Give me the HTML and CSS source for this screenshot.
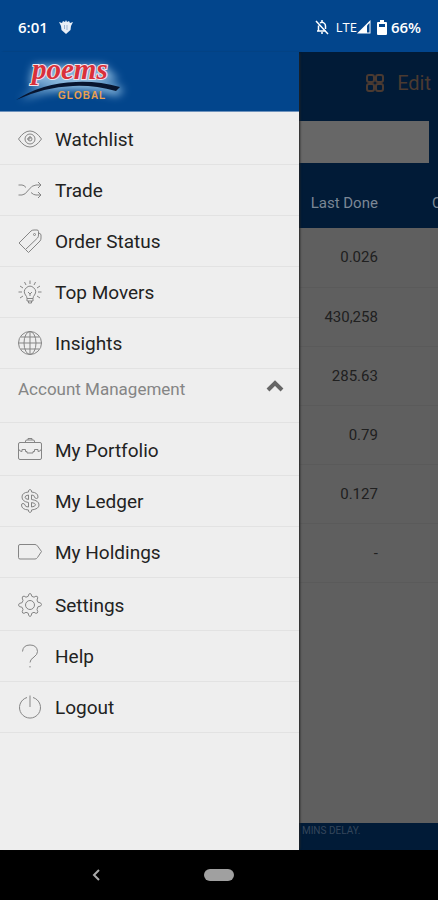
FILE: index.html
```html
<!DOCTYPE html>
<html lang="en">
<head>
<meta charset="utf-8">
<meta name="viewport" content="width=device-width, initial-scale=1">
<title>POEMS Global</title>
<link rel="stylesheet" href="styles.css">
</head>
<body>
<header class="status">
  <span class="clock">6:01</span>
  <svg class="bug" viewBox="0 0 16 16" width="16" height="16" aria-hidden="true"><path d="M1 3l3 1 1-2 2 1 1-2 1 2 2-1 1 2 3-1-2 4-.5 4L8 15l-4.500-4L3 7z" fill="#e9eef6"/><path d="M6.500 6v4M9 6v5" stroke="#9db4d3" fill="none"/></svg>
  <span class="spacer"></span>
  <svg class="bell" viewBox="0 0 16 16" width="16" height="16" fill="none" stroke="#fff" stroke-width="1.500" aria-hidden="true"><path d="M2 2l12 13M3 12h9M4.500 12V6.500M6 4q2-1.500 4 0 1.500 1 1.500 3v3M8 1v2M7 14h2"/></svg>
  <span class="lte">LTE</span>
  <svg class="signal" viewBox="0 0 14 14" width="14" height="14" aria-hidden="true"><path d="M13.500 0v13.500H0z" fill="#fff"/><path d="M10 5.500v7h2.500V3z" fill="#02458c"/></svg>
  <svg class="battery" viewBox="0 0 10 15" width="10" height="15" aria-hidden="true"><path d="M3 0h4v2h2q1 0 1 1v11q0 1-1 1H1q-1 0-1-1V3q0-1 1-1h2z" fill="#fff"/><path d="M2 4h6v3H2z" fill="#02458c"/></svg>
  <span class="percent">66%</span>
</header>
<div class="screen">
  <aside class="drawer">
    <div class="brand">
      <svg class="logo" viewBox="0 0 124 56" width="124" height="56" role="img" aria-label="poems Global">
        <defs>
          <filter id="glow" x="-30%" y="-50%" width="160%" height="200%"><feGaussianBlur stdDeviation="4"/></filter>
        </defs>
        <g filter="url(#glow)" fill="#a9d3ef" stroke="#a9d3ef">
          <path d="M8 46Q52 20 109 37L104 43Q55 30 8 46z" opacity=".85"/>
          <path d="M20 14h70l14 14-88 5z" opacity=".8"/>
        </g>
        <path d="M2 48Q28 31 62 30Q84 29 106 35L102 39Q80 33 59 34Q30 35 2 48z" fill="#07152f"/>
        <text class="word" x="18" y="27">poems</text>
        <text class="global" x="44" y="47">GLOBAL</text>
      </svg>
    </div>
    <nav aria-label="Main menu">
      <ul class="menu">
        <li><a href="#watchlist"><svg viewBox="0 0 24 24"><path d="M.5 12Q6 4 12 4t11.500 8Q18 20 12 20T.5 12z"/><circle cx="12" cy="12" r="5"/><path d="M12 9v3h-3"/><circle cx="12" cy="12" r="2"/></svg>Watchlist</a></li>
        <li><a href="#trade"><svg viewBox="0 0 24 24"><path d="M.5 7H4q2 0 4 2.500M13 14.500Q15.500 17 18 17h5M.5 17H4q3 0 6.500-5T18 7h5M20 4l3 3-3 3M20 14l3 3-3 3"/></svg>Trade</a></li>
        <li><a href="#orders"><svg viewBox="0 0 24 24"><path d="M1 14L13 2q1-1 3-1h3q1.500 0 1.500 1.500V6q0 2-1 3L7.500 20.500z"/><circle cx="16.500" cy="5.500" r="1"/><path d="M7.500 20.500L10.500 23.500 22 12q1-1 1-3V6q0-1.500-2.500-2"/></svg>Order Status</a></li>
        <li><a href="#movers"><svg viewBox="0 0 24 24"><path d="M9 18.500q0-2-1.500-3.500a5.500 5.500 0 1 1 9 0Q15 16.500 15 18.500zM9 18.500V21h6v-2.500M10.500 21v2h3v-2M10 12l2 2 2-2M12 14v2M12 .5V4M6.500 2l1.500 3M17.500 2L16 5M2 6l3 2M22 6l-3 2M.5 12H4M23.500 12H20M2 18l3-2M22 18l-3-2"/></svg>Top Movers</a></li>
        <li><a href="#insights"><svg viewBox="0 0 24 24"><circle cx="12" cy="12" r="11.500"/><ellipse cx="12" cy="12" rx="6" ry="11.500"/><path d="M12 .5v23M.5 12h23M3 6h18M3 18h18"/></svg>Insights</a></li>
      </ul>
      <button class="section" type="button" aria-expanded="true">Account Management<svg viewBox="0 0 18 12" width="18" height="12" aria-hidden="true"><path d="M2 10l7-7 7 7"/></svg></button>
      <ul class="menu">
        <li><a href="#portfolio"><svg viewBox="0 0 24 24"><rect x=".5" y="4.500" width="23" height="17" rx="1.500"/><path d="M7.500 4.500V3Q7.500 2 9 2h6q1.500 0 1.500 1v1.500M10 2V.5h4V2M.5 11q1 2.500 3.500 2.500v-2h3.500v2H9V15h6v-1.500h1.500v-2H20v2q2.500 0 3.500-2.500"/></svg>My Portfolio</a></li>
        <li><a href="#ledger"><svg viewBox="0 0 24 24"><path d="M10.500 3V1.500q1.500-2 3 0V3Q20 3.500 20 8q0 1.500-1.500 1.500T16.500 8q0-2-3-2v4.500Q21 11.500 21 16q0 4-7.500 5v1.500q-1.500 2-3 0V21Q3.500 20.500 3.500 16q0-1.500 1.500-1.500T7 16q0 2 3.500 2v-4.500Q4 12.500 4 8q0-4.500 6.500-5zM10.500 6Q7 6.500 7 8.200q0 1.800 3.500 2.300zM13.500 13.500V18q4-.5 4-2.200 0-1.800-4-2.300z"/></svg>My Ledger</a></li>
        <li><a href="#holdings"><svg viewBox="0 0 24 24"><path d="M2 4.500h15q1.500 0 2.500 1.500l4 5.500-4 6q-1 1.500-2.500 1.500H2Q.5 19 .5 17.500V6Q.5 4.500 2 4.500z"/></svg>My Holdings</a></li>
      </ul>
      <ul class="menu">
        <li><a href="#settings"><svg viewBox="0 0 24 24"><path d="M12 .5q1.500 0 1.800 2.800l2.200.9q2.200-1.700 3.300-.7t-.3 3.500l.9 2.200q3.600.3 3.600 2.300t-3.600 2.300L19 16.500q1.500 2.500.3 3.500t-3.300-.7l-2.200.9q-.3 3.300-1.800 3.300t-1.800-3.300L8 19.300q-2.200 1.700-3.300.7T5 16.500l-.9-2.200Q.5 14 .5 12t3.600-2.300L5 7.500Q3.500 4.500 4.700 3.500T8 4.200l2.200-.9Q10.500.5 12 .5z"/><circle cx="12" cy="12" r="4.500"/></svg>Settings</a></li>
        <li><a href="#help"><svg viewBox="0 0 24 24"><path d="M4.500 7.500Q5 1 12 1t7.500 6.500q0 3-3.500 5.500-4 2.500-4 5.500M12 22v1.500"/></svg>Help</a></li>
        <li><a href="#logout"><svg viewBox="0 0 24 24"><path d="M9 2.500a10.500 10.500 0 1 0 6 0M12 .5V12"/></svg>Logout</a></li>
      </ul>
    </nav>
  </aside>
  <main class="quotes">
    <div class="top">
      <button class="edit" type="button"><svg viewBox="0 0 18 18" width="18" height="18" aria-hidden="true"><rect x="1" y="1" width="7" height="7" rx="2"/><rect x="10" y="1" width="7" height="7" rx="2"/><rect x="1" y="10" width="7" height="7" rx="2"/><rect x="10" y="10" width="7" height="7" rx="2"/></svg>Edit</button>
      <input class="search" type="text" aria-label="Search">
    </div>
    <table>
      <thead><tr><th>Last Done</th><th class="next">C</th></tr></thead>
      <tbody>
        <tr><td>0.026</td><td></td></tr>
        <tr><td>430,258</td><td></td></tr>
        <tr><td>285.63</td><td></td></tr>
        <tr><td>0.79</td><td></td></tr>
        <tr><td>0.127</td><td></td></tr>
        <tr><td>-</td><td></td></tr>
      </tbody>
    </table>
    <p class="delay">MINS DELAY.</p>
  </main>
</div>
<footer class="system">
  <button type="button" aria-label="Back"><svg viewBox="0 0 8 12" width="8" height="12"><path d="M7 1L2 6l5 5"/></svg></button>
  <button class="home" type="button" aria-label="Home"></button>
</footer>
</body>
</html>
```
FILE: styles.css
```css
* { box-sizing: border-box; }
body {
  margin: 0;
  min-height: 100vh;
  display: flex;
  flex-direction: column;
  font-family: Roboto, "Liberation Sans", sans-serif;
  background: #000;
  overflow-x: hidden;
}
button { font: inherit; border: 0; background: none; padding: 0; }

/* Device status bar */
.status {
  height: 52px;
  padding: 2px 17px 0 18px;
  display: flex;
  align-items: center;
  background: #02458c;
  color: #fff;
  font-family: "Open Sans", "Noto Sans", sans-serif;
  font-size: 15px;
  font-weight: 600;
}
.bug { margin-left: 10px; }
.spacer { flex: 1; }
.bell { margin-right: 6px; }
.lte { font-size: 13px; font-weight: 400; }
.battery { margin: 0 4px 0 6px; }

.screen { flex: 1; display: flex; }

/* Navigation drawer */
.drawer {
  flex: 0 0 68.25%;
  background: #eee;
  box-shadow: 2px 0 2px -1px #222;
  z-index: 1;
}
.brand {
  height: 60px;
  padding-left: 14px;
  background: #02458c;
  border-bottom: 1px solid #6d91bb;
}
.logo { display: block; overflow: visible; }
.word {
  font: italic 700 29px "Liberation Serif", serif;
  fill: #d9303a;
  stroke: #f3e3ea;
  stroke-width: 2px;
  paint-order: stroke;
}
.global {
  font: 700 10px "Liberation Sans", sans-serif;
  letter-spacing: 1px;
  fill: #eaa050;
}
.menu { list-style: none; margin: 0; padding: 2px 0 0; }
.menu li { border-bottom: 1px solid #e2e2e2; }
.menu a {
  height: 50px;
  padding-left: 18px;
  display: flex;
  align-items: center;
  gap: 13px;
  color: #222;
  font-size: 19px;
  text-decoration: none;
}
.menu svg {
  width: 24px;
  height: 24px;
  fill: none;
  stroke: #858585;
  stroke-width: 1;
}
.section {
  width: 100%;
  height: 54px;
  padding: 0 15px 14px 18px;
  display: flex;
  align-items: center;
  justify-content: space-between;
  border-bottom: 1px solid #e2e2e2;
  color: #858585;
  font-size: 17px;
}
.section svg { margin-bottom: 6px; fill: none; stroke: #666; stroke-width: 4; }

/* Dimmed quotes page */
.quotes {
  flex: 1;
  min-width: 0;
  overflow: hidden;
  display: flex;
  flex-direction: column;
  background: #5f5f5f;
}
.top { padding: 16px 9px 14px 0; background: #011b37; }
.edit {
  margin: 0 -2px 23px auto;
  height: 30px;
  display: flex;
  align-items: center;
  gap: 13px;
  color: #4a3a31;
  font-size: 20px;
}
.edit svg { fill: none; stroke: #4a3a31; stroke-width: 2; }
.search {
  display: block;
  width: 100%;
  height: 42px;
  border: 0;
  border-radius: 0;
  background: #676767;
}
table { border-collapse: collapse; table-layout: fixed; width: 260px; }
th {
  height: 51px;
  padding: 0;
  background: #011b37;
  color: #7b8795;
  font-size: 15px;
  font-weight: 400;
  text-align: right;
}
th:first-child, td:first-child { width: 79px; }
.next { padding-left: 54px; text-align: left; }
td {
  height: 59px;
  padding: 0;
  border-bottom: 1px solid #5a5a5a;
  color: #202020;
  font-size: 15px;
  text-align: right;
}
.delay {
  margin: auto 0 0;
  height: 27px;
  padding: 2px 3px;
  background: #011b37;
  color: #34465b;
  font-size: 10px;
  line-height: 12px;
}

/* Device navigation bar */
.system {
  height: 50px;
  padding: 0 20%;
  display: grid;
  grid-template-columns: 1fr 30px 1fr;
  align-items: center;
}
.system svg { display: block; margin-left: 4px; fill: none; stroke: #aaa; stroke-width: 2; }
.system button { justify-self: start; }
.home { width: 30px; height: 12px; border-radius: 6px; background: #a0a0a0; }
```
